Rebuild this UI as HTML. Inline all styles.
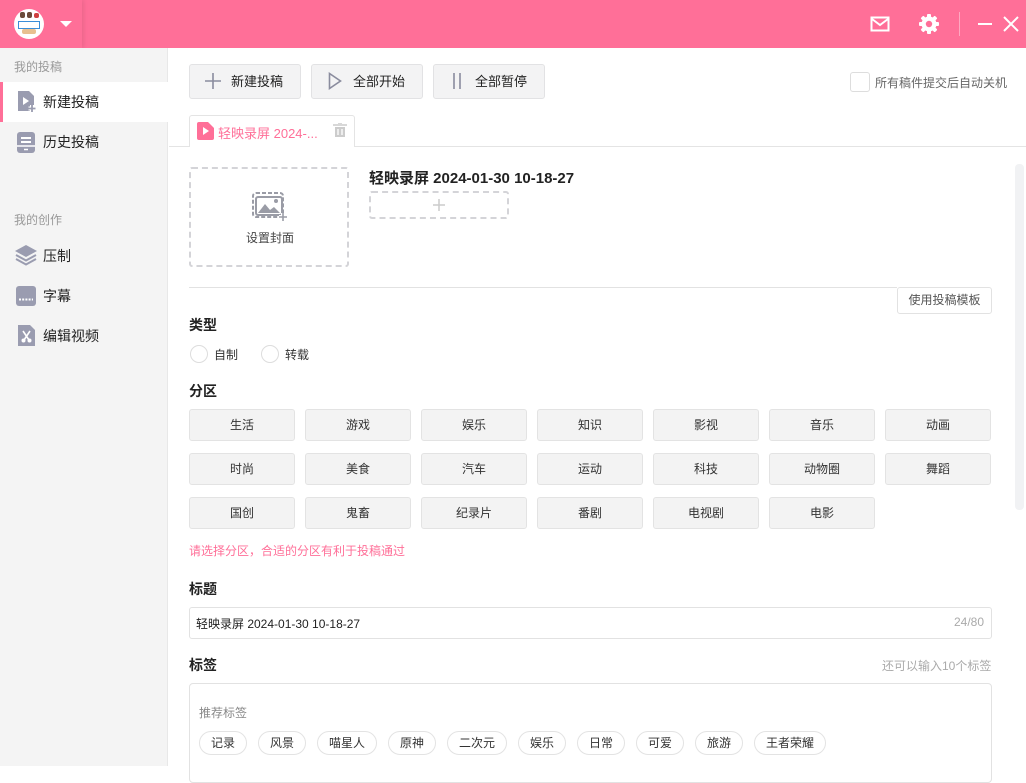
<!DOCTYPE html>
<html><head><meta charset="utf-8"><style>
*{box-sizing:border-box;margin:0;padding:0}
body{width:1026px;height:766px;overflow:hidden;background:#fff;font-family:"Liberation Sans","Noto Sans CJK SC",sans-serif;color:#222;position:relative;font-size:13px}
.a{position:absolute}
.hdr{left:0;top:0;width:1026px;height:48px;background:#ff6f98}
.side{left:0;top:48px;width:168px;height:718px;background:#f4f4f4;border-right:1px solid #e8e8e8}
.sh{font-size:12px;color:#999;left:14px}
.ni{left:0;width:168px;height:40px;font-size:14px;color:#222;padding-left:43px;line-height:40px}
.btn{height:35px;background:#f3f3f4;border:1px solid #e2e2e4;border-radius:3px;font-size:13px;color:#222;line-height:33px}
.g{width:106px;height:32px;background:#f3f3f3;border:1px solid #e3e3e3;border-radius:3px;text-align:center;line-height:30px;font-size:12px;color:#333}
.lbl{font-size:14px;font-weight:bold;color:#222}
.radio{width:18px;height:18px;border:1px solid #ddd;border-radius:50%}
.tag{height:24px;border:1px solid #e3e3e3;border-radius:12px;font-size:12px;line-height:22px;padding:0 11px;color:#333;top:731px}
</style></head><body>
<div class="a hdr"></div>
<div class="a" style="left:0;top:0;width:82px;height:48px;background:#ff6f98;box-shadow:2px 0 4px rgba(0,0,0,.08)"></div>
<div class="a" style="left:14px;top:9px;width:30px;height:30px;border-radius:50%;background:#fff;overflow:hidden">
 <div class="a" style="left:4px;top:12px;width:22px;height:8px;border:1px solid #3a8ed8"></div>
 <div class="a" style="left:6px;top:3px;width:5px;height:6px;background:#6b4a3a;border-radius:2px"></div>
 <div class="a" style="left:13px;top:3px;width:5px;height:6px;background:#6b4a3a;border-radius:2px"></div>
 <div class="a" style="left:20px;top:4px;width:5px;height:5px;background:#d04040;border-radius:2px"></div>
 <div class="a" style="left:8px;top:20px;width:14px;height:5px;background:#e8c090;border-radius:2px"></div>
</div>
<div class="a" style="left:60px;top:21px;width:0;height:0;border-left:6px solid transparent;border-right:6px solid transparent;border-top:6px solid #fff"></div>
<svg class="a" style="left:870px;top:16px" width="20" height="16" viewBox="0 0 20 16"><rect x="1.5" y="1.5" width="17" height="13" fill="none" stroke="#fff" stroke-width="2"/><path d="M2 3l8 6 8-6" fill="none" stroke="#fff" stroke-width="2"/></svg>
<svg class="a" style="left:918px;top:13px" width="22" height="22" viewBox="0 0 22 22"><g fill="#fff"><circle cx="11" cy="11" r="7.5"/><rect x="9" y="1" width="4" height="20" rx="1"/><rect x="1" y="9" width="20" height="4" rx="1"/><rect x="9" y="1" width="4" height="20" rx="1" transform="rotate(45 11 11)"/><rect x="9" y="1" width="4" height="20" rx="1" transform="rotate(-45 11 11)"/></g><circle cx="11" cy="11" r="3.2" fill="#ff6f98"/></svg>
<div class="a" style="left:959px;top:12px;width:1px;height:24px;background:rgba(255,255,255,.4)"></div>
<div class="a" style="left:978px;top:23px;width:14px;height:2px;background:#fff"></div>
<svg class="a" style="left:1003px;top:16px" width="16" height="16" viewBox="0 0 16 16"><path d="M1 1l14 14M15 1L1 15" stroke="#fff" stroke-width="2"/></svg>

<div class="a side"></div>
<div class="a sh" style="top:58px">我的投稿</div>
<div class="a ni" style="top:82px;background:#fff"></div>
<div class="a" style="left:0;top:82px;width:3px;height:40px;background:#ff6f98"></div>
<div class="a ni" style="top:82px">新建投稿</div>
<svg class="a" style="left:16px;top:90px" width="22" height="24" viewBox="0 0 22 24"><path d="M2 1h11l5 5v15H2z" fill="#9a9cb0"/><path d="M7 7v8l6-4z" fill="#fff"/><path d="M16 15v7M12.5 18.5h7" stroke="#fff" stroke-width="4"/><path d="M16 15v7M12.5 18.5h7" stroke="#9a9cb0" stroke-width="1.8"/></svg>
<div class="a ni" style="top:122px">历史投稿</div>
<svg class="a" style="left:16px;top:131px" width="20" height="23" viewBox="0 0 20 23"><rect x="1" y="1" width="18" height="21" rx="3" fill="#9a9cb0"/><path d="M5 7h10M5 11h10" stroke="#fff" stroke-width="2"/><path d="M1 15h18" stroke="#fff" stroke-width="1.5"/><path d="M8 18.5h4" stroke="#fff" stroke-width="1.5"/></svg>
<div class="a sh" style="top:211px">我的创作</div>
<div class="a ni" style="top:236px">压制</div>
<svg class="a" style="left:14px;top:244px" width="24" height="22" viewBox="0 0 24 22"><path d="M12 1l11 6-11 6L1 7z" fill="#9a9cb0"/><path d="M2 11l10 5.5L22 11M2 15l10 5.5L22 15" fill="none" stroke="#9a9cb0" stroke-width="2"/></svg>
<div class="a ni" style="top:276px">字幕</div>
<svg class="a" style="left:16px;top:286px" width="20" height="20" viewBox="0 0 20 20"><rect x="0" y="0" width="20" height="20" rx="3" fill="#9a9cb0"/><path d="M3 13.5h14" stroke="#fff" stroke-width="2" stroke-dasharray="2 1.2"/></svg>
<div class="a ni" style="top:316px">编辑视频</div>
<svg class="a" style="left:17px;top:324px" width="19" height="23" viewBox="0 0 19 23"><path d="M1 1h12l5 5v16H1z" fill="#9a9cb0"/><path d="M6 7l6 9M13 7l-6 9" stroke="#fff" stroke-width="1.6"/><circle cx="6.5" cy="16.5" r="2" fill="#fff"/><circle cx="12.5" cy="16.5" r="2" fill="#fff"/></svg>

<div class="a btn" style="left:189px;top:64px;width:112px;padding-left:41px">新建投稿</div>
<svg class="a" style="left:205px;top:73px" width="16" height="16"><path d="M8 0v16M0 8h16" stroke="#8a8c9e" stroke-width="1.6"/></svg>
<div class="a btn" style="left:311px;top:64px;width:112px;padding-left:41px">全部开始</div>
<svg class="a" style="left:328px;top:72px" width="14" height="18"><path d="M1.5 1.5v15l11-7.5z" fill="none" stroke="#8a8c9e" stroke-width="1.6"/></svg>
<div class="a btn" style="left:433px;top:64px;width:112px;padding-left:41px">全部暂停</div>
<svg class="a" style="left:452px;top:73px" width="10" height="16"><path d="M2 0v16M8 0v16" stroke="#8a8c9e" stroke-width="1.6"/></svg>
<div class="a" style="left:850px;top:72px;width:20px;height:20px;border:1px solid #ddd;border-radius:3px"></div>
<div class="a" style="left:875px;top:74px;font-size:12px;color:#666">所有稿件提交后自动关机</div>

<div class="a" style="left:169px;top:146px;width:857px;height:1px;background:#e4e4e4"></div>
<div class="a" style="left:189px;top:115px;width:166px;height:32px;border:1px solid #e4e4e4;border-bottom:none;border-radius:3px 3px 0 0;background:#fff"></div>
<svg class="a" style="left:197px;top:122px" width="17" height="18"><path d="M0 2a2 2 0 012-2h9l6 6v10a2 2 0 01-2 2H2a2 2 0 01-2-2z" fill="#ff6f98"/><path d="M6 5v8l6-4z" fill="#fff"/></svg>
<div class="a" style="left:218px;top:123px;font-size:13px;color:#ff6f98">轻映录屏 2024-...</div>
<svg class="a" style="left:333px;top:123px" width="14" height="15"><path d="M0 2h14M5 0h4" stroke="#ccc" stroke-width="1.6"/><path d="M2 4h10v10H2z" fill="#ccc"/><path d="M5 6v6M9 6v6" stroke="#fff" stroke-width="1.3"/></svg>

<div class="a" style="left:189px;top:167px;width:160px;height:100px;border:2px dashed #d4d4d8;border-radius:3px"></div>
<svg class="a" style="left:251px;top:191px" width="38" height="32" viewBox="0 0 38 32"><rect x="2" y="2" width="30" height="24" rx="3" fill="none" stroke="#9a9ca6" stroke-width="2" stroke-dasharray="4 2"/><rect x="5" y="6" width="26" height="18" rx="2" fill="none" stroke="#9a9ca6" stroke-width="2"/><path d="M7 22l7-9 5 6 4-3 6 6z" fill="#9a9ca6"/><circle cx="25" cy="10" r="2" fill="#9a9ca6"/><path d="M32 22v8M28 26h8" stroke="#fff" stroke-width="4"/><path d="M32 22v8M28 26h8" stroke="#9a9ca6" stroke-width="1.6"/></svg>
<div class="a" style="left:246px;top:229px;font-size:12px;color:#444">设置封面</div>
<div class="a" style="left:369px;top:167px;font-size:15px;font-weight:bold;color:#222">轻映录屏 2024-01-30 10-18-27</div>
<div class="a" style="left:369px;top:191px;width:140px;height:28px;border:2px dashed #d4d4d8;border-radius:3px"></div>
<svg class="a" style="left:432px;top:198px" width="14" height="14"><path d="M7 1v12M1 7h12" stroke="#ccc" stroke-width="1.5"/></svg>

<div class="a" style="left:189px;top:287px;width:708px;height:1px;background:#e2e2e2"></div>
<div class="a" style="left:897px;top:287px;width:95px;height:27px;border:1px solid #e2e2e2;border-radius:3px;font-size:12px;color:#555;text-align:center;line-height:25px">使用投稿模板</div>
<div class="a" style="left:1015px;top:164px;width:9px;height:346px;background:#f1f2f4;border-radius:4px"></div>

<div class="a lbl" style="left:189px;top:315px">类型</div>
<div class="a radio" style="left:190px;top:345px"></div><div class="a" style="left:214px;top:346px;font-size:12px;color:#333">自制</div>
<div class="a radio" style="left:261px;top:345px"></div><div class="a" style="left:285px;top:346px;font-size:12px;color:#333">转载</div>
<div class="a lbl" style="left:189px;top:381px">分区</div>

<div class="a g" style="left:189px;top:409px">生活</div><div class="a g" style="left:305px;top:409px">游戏</div><div class="a g" style="left:421px;top:409px">娱乐</div><div class="a g" style="left:537px;top:409px">知识</div><div class="a g" style="left:653px;top:409px">影视</div><div class="a g" style="left:769px;top:409px">音乐</div><div class="a g" style="left:885px;top:409px">动画</div>
<div class="a g" style="left:189px;top:453px">时尚</div><div class="a g" style="left:305px;top:453px">美食</div><div class="a g" style="left:421px;top:453px">汽车</div><div class="a g" style="left:537px;top:453px">运动</div><div class="a g" style="left:653px;top:453px">科技</div><div class="a g" style="left:769px;top:453px">动物圈</div><div class="a g" style="left:885px;top:453px">舞蹈</div>
<div class="a g" style="left:189px;top:497px">国创</div><div class="a g" style="left:305px;top:497px">鬼畜</div><div class="a g" style="left:421px;top:497px">纪录片</div><div class="a g" style="left:537px;top:497px">番剧</div><div class="a g" style="left:653px;top:497px">电视剧</div><div class="a g" style="left:769px;top:497px">电影</div>
<div class="a" style="left:189px;top:542px;font-size:12px;color:#ff6f98">请选择分区，合适的分区有利于投稿通过</div>

<div class="a lbl" style="left:189px;top:579px">标题</div>
<div class="a" style="left:189px;top:607px;width:803px;height:32px;border:1px solid #e2e2e2;border-radius:3px"></div>
<div class="a" style="left:196px;top:615px;font-size:12px;color:#222">轻映录屏 2024-01-30 10-18-27</div>
<div class="a" style="left:954px;top:615px;font-size:12px;color:#aaa">24/80</div>
<div class="a lbl" style="left:189px;top:655px">标签</div>
<div class="a" style="left:882px;top:657px;font-size:12px;color:#aaa">还可以输入10个标签</div>
<div class="a" style="left:189px;top:683px;width:803px;height:100px;border:1px solid #e2e2e2;border-radius:4px"></div>
<div class="a" style="left:199px;top:704px;font-size:12px;color:#888">推荐标签</div>
<div class="a tag" style="left:199px">记录</div><div class="a tag" style="left:258px">风景</div><div class="a tag" style="left:317px">喵星人</div><div class="a tag" style="left:388px">原神</div><div class="a tag" style="left:447px">二次元</div><div class="a tag" style="left:518px">娱乐</div><div class="a tag" style="left:577px">日常</div><div class="a tag" style="left:636px">可爱</div><div class="a tag" style="left:695px">旅游</div><div class="a tag" style="left:754px">王者荣耀</div>
</body></html>
